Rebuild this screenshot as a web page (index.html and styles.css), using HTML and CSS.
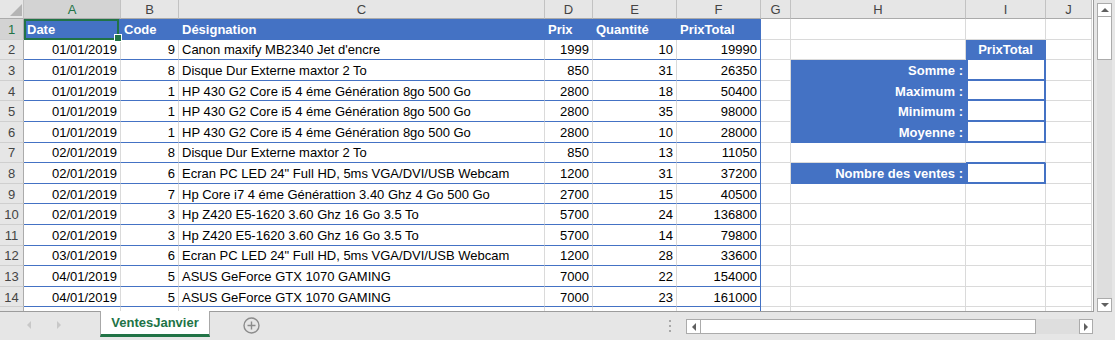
FILE: index.html
```html
<!DOCTYPE html>
<html lang="fr">
<head>
    <meta charset="UTF-8">
    <title>VentesJanvier - Classeur</title>
    <link rel="stylesheet" href="styles.css">
</head>
<body>
    <div class="main">
        <div class="grid">
            <!-- en-têtes de colonnes -->
            <div class="row head">
                <div class="c corner"><svg width="12" height="12" viewBox="0 0 12 12"><polygon points="12,0 12,12 0,12" fill="#b4b4b4"/></svg></div>
                <div class="c ch sel">A</div><div class="c ch">B</div><div class="c ch">C</div><div class="c ch">D</div><div class="c ch">E</div><div class="c ch">F</div><div class="c ch">G</div><div class="c ch">H</div><div class="c ch">I</div><div class="c ch">J</div>
            </div>

            <div class="row">
                <div class="c rh sel">1</div>
                <div class="c th active">Date</div><div class="c th">Code</div><div class="c th">Désignation</div><div class="c th">Prix</div><div class="c th">Quantité</div><div class="c th end">PrixTotal</div>
                <div class="c"></div><div class="c"></div><div class="c"></div><div class="c"></div>
            </div>
            <div class="row">
                <div class="c rh">2</div>
                <div class="c t r">01/01/2019</div><div class="c t r">9</div><div class="c t">Canon maxify MB2340 Jet d'encre</div><div class="c t r">1999</div><div class="c t r">10</div><div class="c t r end">19990</div>
                <div class="c"></div><div class="c"></div><div class="c cap">PrixTotal</div><div class="c"></div>
            </div>
            <div class="row">
                <div class="c rh">3</div>
                <div class="c t r">01/01/2019</div><div class="c t r">8</div><div class="c t">Disque Dur Externe maxtor 2 To</div><div class="c t r">850</div><div class="c t r">31</div><div class="c t r end">26350</div>
                <div class="c"></div><div class="c lbl">Somme :</div><div class="c box"></div><div class="c"></div>
            </div>
            <div class="row">
                <div class="c rh">4</div>
                <div class="c t r">01/01/2019</div><div class="c t r">1</div><div class="c t">HP 430 G2 Core i5 4 éme Génération 8go 500 Go</div><div class="c t r">2800</div><div class="c t r">18</div><div class="c t r end">50400</div>
                <div class="c"></div><div class="c lbl">Maximum :</div><div class="c box"></div><div class="c"></div>
            </div>
            <div class="row">
                <div class="c rh">5</div>
                <div class="c t r">01/01/2019</div><div class="c t r">1</div><div class="c t">HP 430 G2 Core i5 4 éme Génération 8go 500 Go</div><div class="c t r">2800</div><div class="c t r">35</div><div class="c t r end">98000</div>
                <div class="c"></div><div class="c lbl">Minimum :</div><div class="c box"></div><div class="c"></div>
            </div>
            <div class="row">
                <div class="c rh">6</div>
                <div class="c t r">01/01/2019</div><div class="c t r">1</div><div class="c t">HP 430 G2 Core i5 4 éme Génération 8go 500 Go</div><div class="c t r">2800</div><div class="c t r">10</div><div class="c t r end">28000</div>
                <div class="c"></div><div class="c lbl">Moyenne :</div><div class="c box"></div><div class="c"></div>
            </div>
            <div class="row">
                <div class="c rh">7</div>
                <div class="c t r">02/01/2019</div><div class="c t r">8</div><div class="c t">Disque Dur Externe maxtor 2 To</div><div class="c t r">850</div><div class="c t r">13</div><div class="c t r end">11050</div>
                <div class="c"></div><div class="c"></div><div class="c over-box"></div><div class="c"></div>
            </div>
            <div class="row">
                <div class="c rh">8</div>
                <div class="c t r">02/01/2019</div><div class="c t r">6</div><div class="c t">Ecran PC LED 24" Full HD, 5ms VGA/DVI/USB Webcam</div><div class="c t r">1200</div><div class="c t r">31</div><div class="c t r end">37200</div>
                <div class="c"></div><div class="c lbl">Nombre des ventes :</div><div class="c box box-top"></div><div class="c"></div>
            </div>
            <div class="row">
                <div class="c rh">9</div>
                <div class="c t r">02/01/2019</div><div class="c t r">7</div><div class="c t">Hp Core i7 4 éme Générattion 3.40 Ghz 4 Go 500 Go</div><div class="c t r">2700</div><div class="c t r">15</div><div class="c t r end">40500</div>
                <div class="c"></div><div class="c"></div><div class="c"></div><div class="c"></div>
            </div>
            <div class="row">
                <div class="c rh">10</div>
                <div class="c t r">02/01/2019</div><div class="c t r">3</div><div class="c t">Hp Z420 E5-1620 3.60 Ghz 16 Go 3.5 To</div><div class="c t r">5700</div><div class="c t r">24</div><div class="c t r end">136800</div>
                <div class="c"></div><div class="c"></div><div class="c"></div><div class="c"></div>
            </div>
            <div class="row">
                <div class="c rh">11</div>
                <div class="c t r">02/01/2019</div><div class="c t r">3</div><div class="c t">Hp Z420 E5-1620 3.60 Ghz 16 Go 3.5 To</div><div class="c t r">5700</div><div class="c t r">14</div><div class="c t r end">79800</div>
                <div class="c"></div><div class="c"></div><div class="c"></div><div class="c"></div>
            </div>
            <div class="row">
                <div class="c rh">12</div>
                <div class="c t r">03/01/2019</div><div class="c t r">6</div><div class="c t">Ecran PC LED 24" Full HD, 5ms VGA/DVI/USB Webcam</div><div class="c t r">1200</div><div class="c t r">28</div><div class="c t r end">33600</div>
                <div class="c"></div><div class="c"></div><div class="c"></div><div class="c"></div>
            </div>
            <div class="row">
                <div class="c rh">13</div>
                <div class="c t r">04/01/2019</div><div class="c t r">5</div><div class="c t">ASUS GeForce GTX 1070 GAMING</div><div class="c t r">7000</div><div class="c t r">22</div><div class="c t r end">154000</div>
                <div class="c"></div><div class="c"></div><div class="c"></div><div class="c"></div>
            </div>
            <div class="row">
                <div class="c rh">14</div>
                <div class="c t r">04/01/2019</div><div class="c t r">5</div><div class="c t">ASUS GeForce GTX 1070 GAMING</div><div class="c t r">7000</div><div class="c t r">23</div><div class="c t r end">161000</div>
                <div class="c"></div><div class="c"></div><div class="c"></div><div class="c"></div>
            </div>
            <div class="row">
                <div class="c rh">15</div>
                <div class="c t r">05/01/2019</div><div class="c t r"></div><div class="c t"></div><div class="c t r"></div><div class="c t r"></div><div class="c t r end"></div>
                <div class="c"></div><div class="c"></div><div class="c"></div><div class="c"></div>
            </div>
        </div>

        <div class="vscroll">
            <div class="sb-btn"><span class="arr up"></span></div>
            <div class="sb-thumb"></div>
            <div class="sb-btn"><span class="arr down"></span></div>
        </div>
    </div>

    <div class="tabbar">
        <div class="tab-nav">
            <span class="nav-arr left"></span>
            <span class="nav-arr right"></span>
        </div>
        <div class="tab">VentesJanvier</div>
        <div class="add-sheet">
            <svg width="17" height="17" viewBox="0 0 17 17">
                <circle cx="8.5" cy="8.5" r="7.5" fill="none" stroke="#8c8c8c" stroke-width="1.4"/>
                <path d="M8.5 4.5v8M4.5 8.5h8" stroke="#8c8c8c" stroke-width="1.4"/>
            </svg>
        </div>
        <div class="split"><i></i><i></i><i></i></div>
        <div class="hscroll">
            <div class="sb-btn"><span class="arr left"></span></div>
            <div class="h-thumb"></div>
            <div class="sb-btn"><span class="arr right"></span></div>
        </div>
    </div>
</body>
</html>
```

FILE: styles.css
```css
* {
    box-sizing: border-box;
    margin: 0;
    padding: 0;
}
body {
    font-family: 'Liberation Sans', Arial, sans-serif;
    font-size: 13px;
    color: #000;
    background-color: #e6e6e6;
    width: 1115px;
    height: 340px;
    overflow: hidden;
}
.main {
    display: flex;
    height: 312px;
}
.grid {
    width: 1094px;
    height: 312px;
    background: #fff;
    border-right: 1px solid #9c9c9c;
    border-bottom: 1px solid #9c9c9c;
    overflow: hidden;
}
.row {
    display: grid;
    grid-template-columns: 24px 97px 58px 366px 48px 84px 84px 30px 175px 80px 46px;
    height: 20.6px;
}
.row.head {
    height: 19px;
}
.c {
    display: flex;
    align-items: center;
    padding: 1px 3px 0;
    border-right: 1px solid #dadada;
    border-bottom: 1px solid #dadada;
    white-space: nowrap;
    line-height: 1;
}
.r {
    justify-content: flex-end;
}

/* en-têtes */
.corner {
    background: #e6e6e6;
    border-right-color: #c2c2c2;
    border-bottom-color: #ababab;
    align-items: flex-end;
    justify-content: flex-end;
    padding: 0 1px 2px 0;
}
.ch {
    background: #e6e6e6;
    color: #444;
    justify-content: center;
    border-right-color: #c2c2c2;
    border-bottom-color: #ababab;
}
.rh {
    background: #e6e6e6;
    color: #444;
    justify-content: center;
    padding: 1px 0 0;
    border-right-color: #ababab;
    border-bottom-color: #cfcfcf;
}
.ch.sel,
.rh.sel {
    background: #d3d3d3;
    color: #217346;
}

/* tableau des ventes */
.th {
    background: #4472c4;
    color: #fff;
    font-weight: bold;
    border-color: #4472c4;
}
.t {
    border-bottom-color: #4472c4;
}
.end {
    border-right-color: #4472c4;
}
.active {
    position: relative;
}
.active::after {
    content: '';
    position: absolute;
    left: 0;
    top: 0;
    right: 1px;
    bottom: -1px;
    border: 2px solid #217346;
}
.active::before {
    content: '';
    position: absolute;
    right: -2px;
    bottom: -3px;
    width: 6px;
    height: 6px;
    background: #217346;
    border: 1px solid #fff;
    z-index: 2;
}

/* zone de calcul */
.cap {
    background: #4472c4;
    color: #fff;
    font-weight: bold;
    justify-content: center;
    border-color: #4472c4;
}
.lbl {
    background: #4472c4;
    color: #fff;
    font-weight: bold;
    justify-content: flex-end;
    border-color: #4472c4;
    padding-right: 2px;
}
.box {
    border-left: 2px solid #4472c4;
    border-right: 2px solid #4472c4;
    border-bottom: 2px solid #4472c4;
}
.box-top {
    border-top: 1px solid #4472c4;
}
.over-box {
    border-bottom-color: #4472c4;
}

/* barres de défilement */
.vscroll {
    width: 15px;
    height: 309px;
    margin: 3px 0 0 3px;
    background: #dedede;
    display: flex;
    flex-direction: column;
}
.vscroll .sb-btn:last-child {
    margin-top: auto;
}
.sb-btn {
    width: 15px;
    height: 14px;
    background: #fff;
    border: 1px solid #ababab;
    display: flex;
    align-items: center;
    justify-content: center;
    flex-shrink: 0;
}
.sb-thumb {
    height: 43px;
    background: #fff;
    border: 1px solid #ababab;
    border-top: none;
}
.arr {
    width: 0;
    height: 0;
    border: 4px solid transparent;
}
.arr.up {
    border-bottom-color: #606060;
    border-top-width: 0;
}
.arr.down {
    border-top-color: #606060;
    border-bottom-width: 0;
}
.arr.left {
    border-right-color: #606060;
    border-left-width: 0;
}
.arr.right {
    border-left-color: #606060;
    border-right-width: 0;
}

/* onglets */
.tabbar {
    display: flex;
    align-items: flex-start;
    height: 28px;
}
.tab-nav {
    width: 100px;
    display: flex;
    gap: 26px;
    padding: 9px 0 0 27px;
}
.nav-arr {
    width: 0;
    height: 0;
    border: 4px solid transparent;
}
.nav-arr.left {
    border-right: 4px solid #c8c8c8;
    border-left-width: 0;
}
.nav-arr.right {
    border-left: 4px solid #c8c8c8;
    border-right-width: 0;
}
.tab {
    width: 110px;
    height: 26px;
    margin-top: -1px;
    background: #fff;
    border-left: 1px solid #a8a8a8;
    border-right: 1px solid #a8a8a8;
    border-bottom: 3px solid #217346;
    color: #217346;
    font-weight: bold;
    text-align: center;
    line-height: 24px;
}
.add-sheet {
    margin: 5px 0 0 33px;
    height: 17px;
}
.split {
    margin: 8px 15px 0 auto;
    display: flex;
    flex-direction: column;
    gap: 3px;
}
.split i {
    width: 2px;
    height: 2px;
    background: #a8a8a8;
}
.hscroll {
    width: 407px;
    height: 15px;
    margin: 7px 22px 0 0;
    display: flex;
    background: #dedede;
}
.hscroll .sb-btn {
    width: 15px;
    height: 15px;
}
.hscroll .sb-btn:last-child {
    margin-left: auto;
    width: 14px;
}
.h-thumb {
    width: 335px;
    background: #fff;
    border: 1px solid #ababab;
    border-left: none;
}
```
